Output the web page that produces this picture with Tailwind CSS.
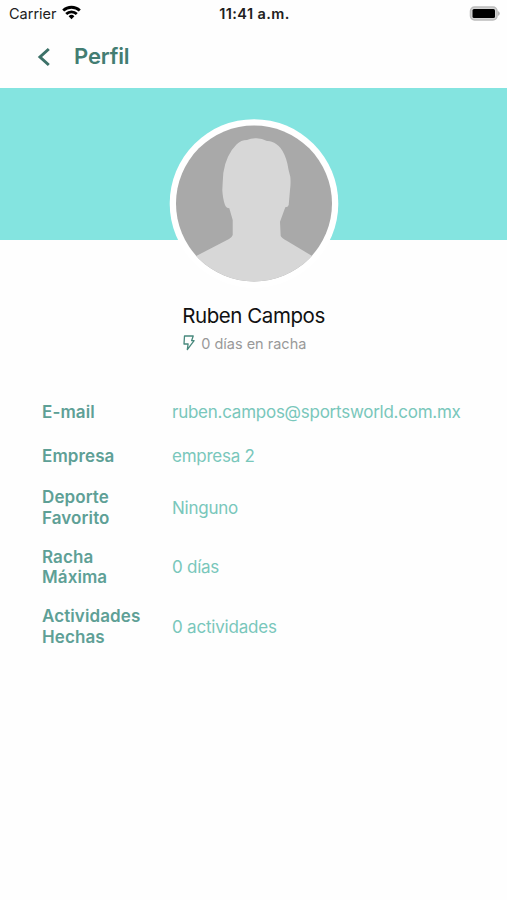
<!doctype html>
<html lang="es">
  <head>
    <meta charset="UTF-8" />
    <meta name="viewport" content="width=device-width, initial-scale=1.0" />
    <script src="https://cdn.jsdelivr.net/npm/@tailwindcss/browser@4"></script>
    <title>Perfil</title>
  </head>
  <body class="min-h-screen bg-[#fefefe] font-['Inter',sans-serif]">
    <!-- Status bar -->
    <div class="grid h-7 grid-cols-3 items-center pl-[9px] pr-[7px] text-[#202020]">
      <div class="flex items-center gap-[5px]">
        <span class="text-[14.5px]">Carrier</span>
        <svg class="mb-[3px] h-[15px] w-[19px]" viewBox="0 0 19 15" fill="none" stroke="#000" stroke-width="2.8">
          <path d="M1.2 5.6a12 12 0 0 1 16.6 0" />
          <path d="M4.2 9a7.6 7.6 0 0 1 10.6 0" />
          <path d="M9.5 14.2 6.6 11.2a4.2 4.2 0 0 1 5.8 0z" fill="#000" stroke="none" />
        </svg>
      </div>
      <span class="whitespace-nowrap text-center text-[14.5px] font-semibold tracking-[0.4px]">11:41 a.m.</span>
      <svg class="mb-[2px] h-[15px] w-[31px] justify-self-end" viewBox="0 0 31 15">
        <rect x="1.5" y="1" width="26.5" height="13" rx="4" fill="#d4d4d4" stroke="#bcbcbc" stroke-width="1.5" />
        <rect x="3.5" y="3" width="22.5" height="9" rx="1.5" fill="#000" />
        <path d="M28.8 5v5q2-.8 2-2.5T28.8 5z" fill="#b8b8b8" />
      </svg>
    </div>

    <!-- Header -->
    <header class="flex h-[60px] items-center gap-[22px] pb-[3px] pl-[36px] text-[#437d72]">
      <svg class="h-5 w-4" viewBox="0 0 16 20" fill="none" stroke="#3c7168" stroke-width="3">
        <path d="M12.8 2 4 10l8.800 8" />
      </svg>
      <h1 class="text-[22px] font-semibold tracking-[-0.15px]">Perfil</h1>
    </header>

    <!-- Banner and avatar -->
    <div class="h-[152px] bg-[#84e4e0] pt-[31px]">
      <svg class="mx-auto h-[170px] w-[170px]" viewBox="0 0 170 170">
        <defs>
          <clipPath id="avatar"><circle cx="85" cy="84.5" r="78" /></clipPath>
        </defs>
        <circle cx="85" cy="84.5" r="84.3" fill="#fff" />
        <g clip-path="url(#avatar)">
          <rect width="170" height="170" fill="#a9a9a9" />
          <path
            d="M87.700 19.300Q82 19 78 21q-6 0-10.300 4.300Q62 31 59 37.700 55.500 45 54.300 54q-.6 9-1 17 .5 9 2.700 15 1.500 3.300 4.300 3.300L63.700 101v15q-.7 2.500-3.700 4l-32.300 16.700L20 142v28h130v-28l-7.300-5.300-25-15q-5-2.500-6-4.700L111 102.700l5.300-14.400q2.700 0 3.400-2.300L121 71q1-7 .3-13.300-1.800-6-3-13.400Q116 35 111.700 29.300q-4-5-9-6.600-2.700-1-4.700-.7-5-2.700-10.300-2.700z"
            fill="#d7d7d7"
          />
        </g>
      </svg>
    </div>

    <div class="mx-auto mt-[62px] w-fit">
      <h2 class="text-[20.5px] leading-7 tracking-[-0.43px] text-[#111]">Ruben Campos</h2>
      <p class="flex h-[27px] items-center gap-[6px] pl-px text-[14.5px] text-[#999]">
        <svg class="mb-[2px] h-4 w-3" viewBox="0 0 12 16" fill="none" stroke="#47887c" stroke-width="1.3" stroke-linejoin="round">
          <path d="M1.500 1h8.700L8.600 5.700h2.500L4.300 14.600 5.100 9H1z" />
        </svg>
        <span>0 días en racha</span>
      </p>
    </div>

    <!-- Profile details -->
    <dl class="mt-[33px] pl-[42px] text-[17px] leading-[20.5px] text-[#79c7bb]">
      <div class="flex h-11 items-center">
        <dt class="w-[130px] font-semibold tracking-[0.1px] text-[#5ea096]">E-mail</dt>
        <dd class="tracking-[-0.25px]">ruben.campos@sportsworld.com.mx</dd>
      </div>
      <div class="flex h-11 items-center">
        <dt class="w-[130px] font-semibold tracking-[0.1px] text-[#5ea096]">Empresa</dt>
        <dd class="tracking-[-0.25px]">empresa 2</dd>
      </div>
      <div class="flex h-[59.5px] items-center">
        <dt class="w-[130px] font-semibold tracking-[0.1px] text-[#5ea096]">Deporte<br />Favorito</dt>
        <dd class="tracking-[-0.25px]">Ninguno</dd>
      </div>
      <div class="flex h-[59.5px] items-center">
        <dt class="w-[130px] font-semibold tracking-[0.1px] text-[#5ea096]">Racha<br />Máxima</dt>
        <dd class="tracking-[-0.25px]">0 días</dd>
      </div>
      <div class="flex h-[59.5px] items-center">
        <dt class="w-[130px] font-semibold tracking-[0.1px] text-[#5ea096]">Actividades<br />Hechas</dt>
        <dd class="tracking-[-0.2px]">0 actividades</dd>
      </div>
    </dl>
  </body>
</html>
